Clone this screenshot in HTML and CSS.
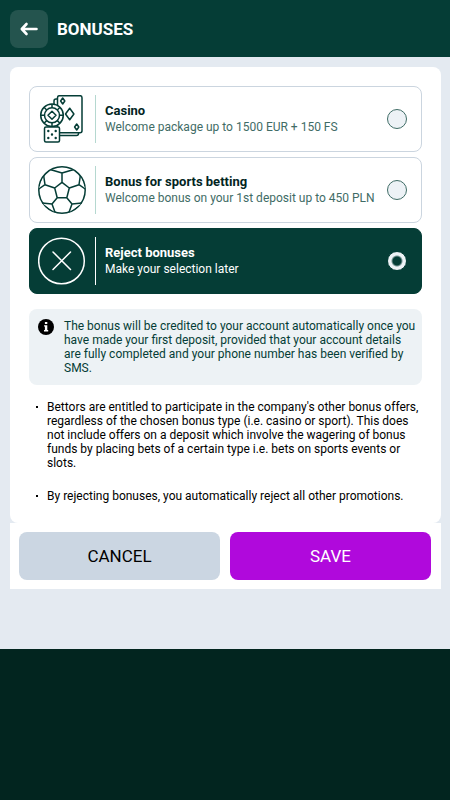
FILE: index.html
```
<!DOCTYPE html>
<html lang="en">
<head>
  <meta charset="UTF-8" />
  <meta name="viewport" content="width=device-width, initial-scale=1.0" />
  <title>Bonuses</title>
  <link rel="stylesheet" href="styles.css">
</head>
<body>
  <header class="header">
    <button class="back" type="button" aria-label="Back">
      <svg width="18" height="14" viewBox="0 0 18 14" fill="none" stroke="currentColor" stroke-width="2.6" stroke-linecap="round" stroke-linejoin="round">
        <path d="M6.5 2 1.8 7l4.7 5M2 7h14.5" />
      </svg>
    </button>
    <h1 class="title">BONUSES</h1>
  </header>

  <main class="main">
    <form>
      <div class="card">
        <div class="bonuses">
          <label class="bonus">
            <svg class="bonus-icon" viewBox="0 0 48 48">
              <!-- cards -->
              <path d="M19.5 4H18a2 2 0 0 0-2 2v32.500a2 2 0 0 0 2 2h20.500a2 2 0 0 0 2-2v-1" />
              <rect x="19.500" y=".7" width="24.500" height="37" rx="2" />
              <path d="m24.700 3 2.100 3-2.100 3-2.100-3zM31.700 13.200l4.200 5.800-4.200 5.800-4.200-5.800zM38.700 29l2.100 3-2.100 3-2.100-3z" />
              <!-- chip -->
              <circle cx="14" cy="20.300" r="11.300" />
              <circle cx="14" cy="20.300" r="7.500" />
              <path d="M14 9v3.800M14 27.800v3.800M2.700 20.300h3.800M21.500 20.300h3.800M6 12.300l2.700 2.700M19.300 25.600l2.700 2.700M22 12.300l-2.700 2.700M8.700 25.600 6 28.300" />
              <path d="m14 16.300 4 4-4 4-4-4z" />
              <!-- dice -->
              <rect x="6.500" y="32" width="15" height="15" rx="1.500" />
              <path class="dots" d="M10.300 36h.01M17.700 36h.01M14 39.500h.01M10.300 43h.01M17.700 43h.01" />
            </svg>
            <span class="bonus-text">
              <strong>Casino</strong>
              <span>Welcome package up to 1500 EUR + 150 FS</span>
            </span>
            <input class="radio" type="radio" name="bonus" value="casino" />
          </label>

          <label class="bonus">
            <svg class="bonus-icon" viewBox="0 0 48 48">
              <circle cx="24" cy="24" r="23.2" />
              <path d="m24 16.3 7.3 5.7-2.5 9.7h-9.6L16.7 22zM24 16.3V7M13 3.7 24 7l11-3.300M31.3 22l9.7-3.300M42.3 10 41 18.7l6.2 4.300M28.8 31.7 34 38M44 37l-10 1-3 8.200M19.2 31.7 14 38M4 37l10 1 3 8.200M16.7 22 7 18.700M5.7 10 7 18.7.8 23" />
            </svg>
            <span class="bonus-text">
              <strong>Bonus for sports betting</strong>
              <span>Welcome bonus on your 1st deposit up to 450 PLN</span>
            </span>
            <input class="radio" type="radio" name="bonus" value="sport" />
          </label>

          <label class="bonus">
            <svg class="bonus-icon" viewBox="0 0 48 48">
              <circle cx="23.5" cy="24" r="22.8" />
              <path d="m15 15 17.5 17.5M32.5 15 15 32.5" stroke-linecap="round" />
            </svg>
            <span class="bonus-text">
              <strong>Reject bonuses</strong>
              <span>Make your selection later</span>
            </span>
            <input class="radio" type="radio" name="bonus" value="none" checked />
          </label>
        </div>

        <div class="info">
          <svg class="info-icon" viewBox="0 0 16 16">
            <circle cx="8" cy="8" r="8" />
            <path fill="#fff" d="M6.900 3.100h2.400v2H6.900zM6.100 6.200h3.200v4.900h.9v1.400H6v-1.400h.9V7.600h-.8z" />
          </svg>
          <p>The bonus will be credited to your account automatically once you have made your first deposit, provided that your account details are fully completed and your phone number has been verified by SMS.</p>
        </div>

        <ul class="rules">
          <li>Bettors are entitled to participate in the company's other bonus offers, regardless of the chosen bonus type (i.e. casino or sport). This does not include offers on a deposit which involve the wagering of bonus funds by placing bets of a certain type i.e. bets on sports events or slots.</li>
          <li>By rejecting bonuses, you automatically reject all other promotions.</li>
        </ul>
      </div>

      <div class="actions">
        <button class="btn" type="button">CANCEL</button>
        <button class="btn btn-save" type="submit">SAVE</button>
      </div>
    </form>
  </main>
</body>
</html>
```

FILE: styles.css
```
* {
  box-sizing: border-box;
}
body {
  margin: 0;
  background: #02251f;
  color: #000;
  font-family: Roboto, sans-serif;
  font-size: 12px;
  line-height: 14px;
}
.header {
  display: flex;
  align-items: center;
  gap: 9px;
  padding: 10px 10px 9px;
  background: #053d36;
  color: #fff;
}
.back {
  display: flex;
  align-items: center;
  justify-content: center;
  width: 38px;
  height: 38px;
  padding: 0;
  border: none;
  border-radius: 8px;
  background: #24544e;
  color: #fff;
  cursor: pointer;
}
.title {
  margin: 0;
  font-size: 17px;
  line-height: 20px;
  font-weight: 700;
}
.main {
  padding: 10px 9px 60px 10px;
  background: #e4eaf1;
}
.card {
  padding: 19px 19px 20px;
  border-radius: 8px;
  background: #fff;
}
.bonuses {
  display: flex;
  flex-direction: column;
  gap: 5px;
}
.bonus {
  display: flex;
  align-items: center;
  gap: 9px;
  padding: 8px 14px 8px 8px;
  border: 1px solid #cbd5df;
  border-radius: 8px;
  background: #fff;
  color: #3f6c66;
  cursor: pointer;
}
.bonus-icon {
  flex: none;
  width: 48px;
  height: 48px;
  fill: #fff;
  stroke: #053d36;
  stroke-width: 1.5;
  stroke-linejoin: round;
}
.dots {
  stroke-width: 2.4;
  stroke-linecap: round;
}
.bonus-text {
  display: flex;
  flex: 1;
  flex-direction: column;
  justify-content: center;
  gap: 2px;
  height: 48px;
  padding-left: 9px;
  border-left: 1px solid #b5d8d0;
}
.bonus-text strong {
  color: #02251f;
  font-size: 13px;
}
.radio {
  flex: none;
  width: 20px;
  height: 20px;
  margin: 0;
  appearance: none;
  border: 1px solid #3f6c66;
  border-radius: 50%;
  background: #edf2f6;
  cursor: pointer;
}
.radio:checked {
  border-color: #053d36;
  background: radial-gradient(circle, #053d36 4px, #edf2f6 6px);
}
.bonus:has(:checked) {
  border-color: #053d36;
  background: #053d36;
  color: #fff;
}
.bonus:has(:checked) .bonus-icon {
  fill: none;
  stroke: #fff;
}
.bonus:has(:checked) .bonus-text {
  border-color: #fff;
}
.bonus:has(:checked) strong {
  color: #fff;
}
.info {
  display: flex;
  gap: 10px;
  margin-top: 15px;
  padding: 10px 4px 10px 9px;
  border-radius: 8px;
  background: #edf2f5;
  color: #053d36;
}
.info-icon {
  flex: none;
  width: 16px;
  height: 16px;
  fill: #000;
}
.info p {
  margin: 0;
}
.rules {
  display: grid;
  gap: 19px;
  margin: 15px 0 0;
  padding: 0 0 0 7px;
  list-style: none;
}
.rules li {
  display: flex;
  gap: 9px;
}
.rules li::before {
  content: "";
  flex: none;
  width: 2px;
  height: 2px;
  margin-top: 6px;
  background: #000;
}
.actions {
  display: flex;
  gap: 10px;
  padding: 9px 10px 9px 9px;
  background: #fff;
}
.btn {
  flex: 1;
  height: 48px;
  border: none;
  border-radius: 8px;
  background: #cbd6e2;
  color: #000;
  font-family: inherit;
  font-size: 17px;
  cursor: pointer;
}
.btn-save {
  background: #b009dc;
  color: #fff;
}
```
